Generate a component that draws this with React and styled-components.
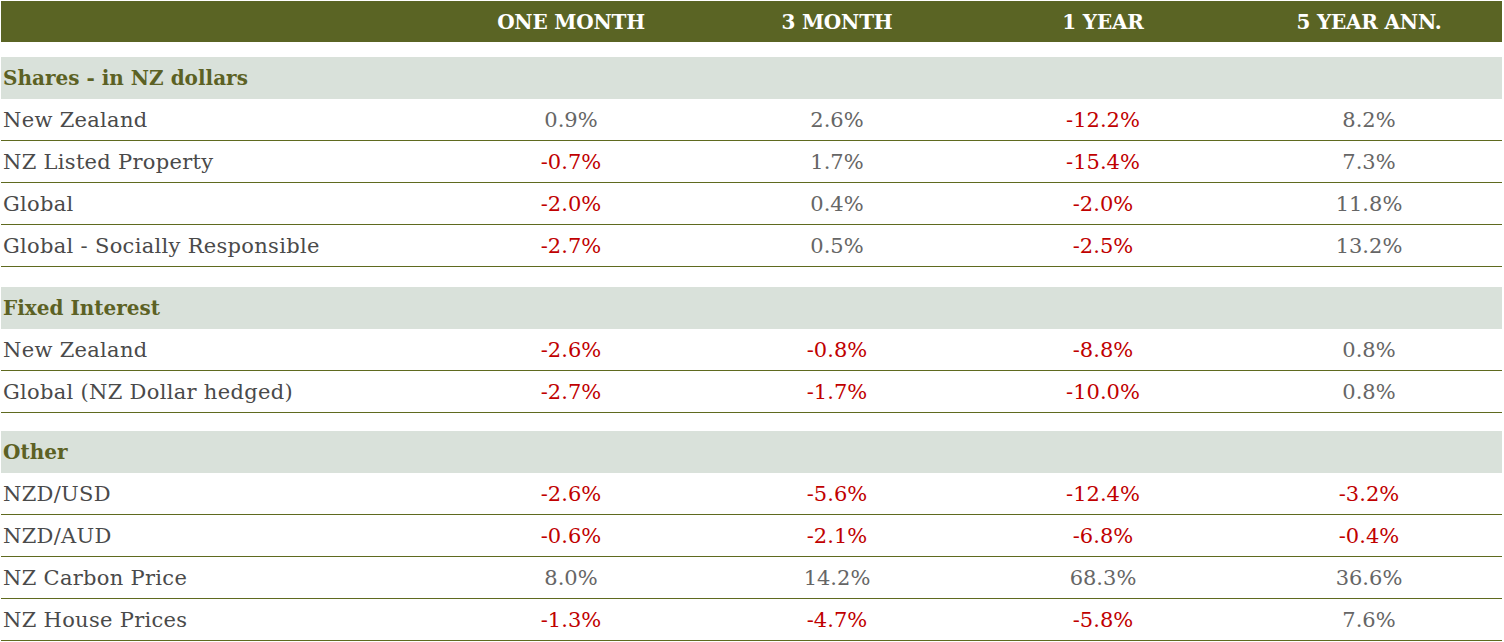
import React from 'react';
import styled, { createGlobalStyle } from 'styled-components';

const GlobalStyle = createGlobalStyle`
    body {
        margin: 0;
        background: #ffffff;
        font-family: 'DejaVu Serif', 'Liberation Serif', serif;
    }
`;

const Table = styled.div`
    width: 1501px;
    margin: 1px 0 0 1px;
    display: flex;
    flex-direction: column;
`;

const Grid = styled.div`
    display: grid;
    grid-template-columns: 437px repeat(4, 1fr);
    align-items: center;
`;

const HeadRow = styled(Grid)`
    height: 41px;
    background: #5a6424;
    margin-bottom: 15px;
`;

const HeadCell = styled.div`
    color: #ffffff;
    font-weight: bold;
    font-size: 20px;
    text-align: center;
    letter-spacing: -0.2px;
`;

const SectionRow = styled.div`
    height: 42px;
    background: #d9e1da;
    display: flex;
    align-items: center;
    padding-left: 2px;
    color: #5c6124;
    font-weight: bold;
    font-size: 20px;
`;

const Row = styled(Grid)`
    height: 41px;
    border-bottom: 1px solid #5f6a1f;
    font-size: 21px;
`;

const Label = styled.div`
    padding-left: 2px;
    color: #4a4a4a;
    letter-spacing: 0.3px;
`;

const Value = styled.div`
    text-align: center;
    color: ${(p) => (p.$neg ? '#c00000' : '#666666')};
`;

const Gap = styled.div`
    height: ${(p) => p.$size}px;
`;

const sections = [
    {
        title: 'Shares - in NZ dollars',
        rows: [
            ['New Zealand', '0.9%', '2.6%', '-12.2%', '8.2%'],
            ['NZ Listed Property', '-0.7%', '1.7%', '-15.4%', '7.3%'],
            ['Global', '-2.0%', '0.4%', '-2.0%', '11.8%'],
            ['Global - Socially Responsible', '-2.7%', '0.5%', '-2.5%', '13.2%']
        ]
    },
    {
        title: 'Fixed Interest',
        gap: 20,
        rows: [
            ['New Zealand', '-2.6%', '-0.8%', '-8.8%', '0.8%'],
            ['Global (NZ Dollar hedged)', '-2.7%', '-1.7%', '-10.0%', '0.8%']
        ]
    },
    {
        title: 'Other',
        gap: 18,
        rows: [
            ['NZD/USD', '-2.6%', '-5.6%', '-12.4%', '-3.2%'],
            ['NZD/AUD', '-0.6%', '-2.1%', '-6.8%', '-0.4%'],
            ['NZ Carbon Price', '8.0%', '14.2%', '68.3%', '36.6%'],
            ['NZ House Prices', '-1.3%', '-4.7%', '-5.8%', '7.6%']
        ]
    }
];

const headings = ['ONE MONTH', '3 MONTH', '1 YEAR', '5 YEAR ANN.'];

export default function App() {
    return (
        <>
            <GlobalStyle />
            <Table>
                <HeadRow>
                    <div />
                    {headings.map((h) => (
                        <HeadCell key={h}>{h}</HeadCell>
                    ))}
                </HeadRow>
                {sections.map((s) => (
                    <React.Fragment key={s.title}>
                        {s.gap && <Gap $size={s.gap} />}
                        <SectionRow>{s.title}</SectionRow>
                        {s.rows.map(([label, ...vals]) => (
                            <Row key={label + vals[0]}>
                                <Label>{label}</Label>
                                {vals.map((v, j) => (
                                    <Value key={j} $neg={v.startsWith('-')}>
                                        {v}
                                    </Value>
                                ))}
                            </Row>
                        ))}
                    </React.Fragment>
                ))}
            </Table>
        </>
    );
}
